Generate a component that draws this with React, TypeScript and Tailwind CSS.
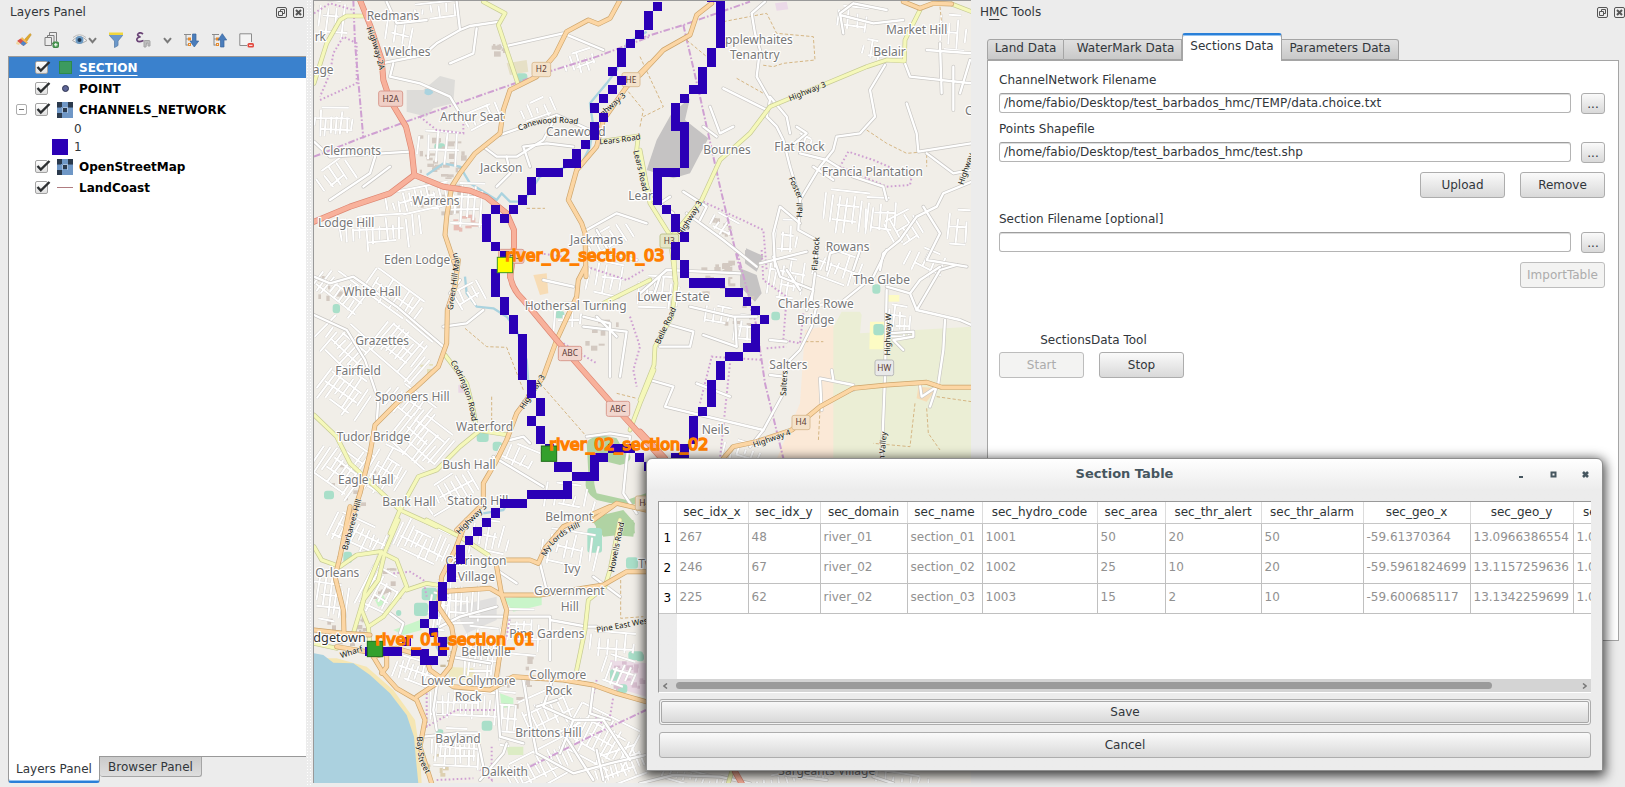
import React from "react";

/* ------------------------------------------------------------------ */
/* Map                                                                  */
/* Geometry is stored per tile, in thirds of a pixel from tile origin.  */
/* ------------------------------------------------------------------ */

type TileId = "A" | "B" | "C" | "D" | "E" | "F";

const tileOrigin: Record<TileId, string> = {
  A: "translate(310 0) scale(0.33333)",
  B: "translate(640 0) scale(0.33333)",
  C: "translate(310 260) scale(0.33333)",
  D: "translate(640 250) scale(0.33333)",
  E: "translate(310 520) scale(0.33333)",
  F: "translate(640 450) scale(0.33333)",
};

type Shape = [TileId, string];

const minor: Shape[] = [
  ["A", "M215,190 L340,165 L380,130 L450,90 L480,78 L570,65 M450,90 L440,5"],
  ["A", "M570,405 L740,345 L850,395 M740,345 L700,420 L620,470 L560,470 L520,440"],
  ["A", "M12,425 L60,470 L300,455 M200,455 L180,520 L60,600 M240,500 L160,560"],
  ["A", "M580,140 L760,100 L880,150 M500,85 L490,160 L420,190 M250,190 L240,230 L330,250 L420,290 L450,340"],
  ["A", "M230,5 L260,70 L350,60 M660,500 L640,440 L710,430 L790,440"],
  ["A", "M560,560 L600,520 L590,470 M830,690 L920,640 L1010,670 M860,690 L900,760 L980,780"],
  ["B", "M375,5 L335,40 L345,100 L360,150 L350,230 L390,300 L380,350 L410,380 L430,420 L450,500 L480,600 L475,690 L530,720 L525,810"],
  ["B", "M735,195 L690,270 L705,350 L660,400 L590,410 L580,450 L540,500 L480,600"],
  ["B", "M995,545 L910,580 L890,620 L830,650 L780,720 L730,760 L720,810"],
  ["B", "M610,100 L600,40 L640,10 M600,45 L700,70 L790,60 M640,10 L740,30"],
  ["B", "M390,290 L440,350 L450,400 M250,265 L380,330 M210,320 L240,400 L280,380 M230,410 L190,380"],
  ["B", "M130,575 L200,620 L180,660 M140,640 L250,720 L350,800 M100,640 L60,610 L90,590"],
  ["B", "M800,310 L830,400 L835,455 L995,430 M860,460 L940,520 L990,510"],
  ["B", "M795,190 L810,230 L995,250 M900,130 L905,280 M940,200 L940,330 M990,180 L960,280 M860,150 L995,160"],
  ["B", "M480,460 L560,480 L640,530 L730,560 L740,600 M520,500 L580,540 M440,450 L500,400 L470,380"],
  ["B", "M480,670 L420,620 L400,700 L405,800 M560,810 L570,760 L640,740 M850,620 L900,700 L860,780 L980,800"],
  ["D", "M740,0 L700,80 L600,160 L530,165 L515,230 L480,300 L440,340 L430,430 L370,540 L330,590"],
  ["D", "M740,110 L810,130 L830,180 L960,210 L995,225"],
  ["D", "M740,120 L735,380 L725,625"],
  ["D", "M915,210 L910,300 L895,400 M545,480 L540,385 L640,405 L640,420 M575,360 L580,390"],
  ["D", "M525,70 L515,150 M500,5 L440,20 L360,40 M400,20 L420,80 L520,120 L500,180 M440,60 L480,120"],
  ["D", "M0,130 L80,60 L300,70 M60,80 L40,140 M150,170 L280,200 L350,200 M285,200 L290,290"],
  ["D", "M190,255 L290,290 M90,225 L160,245 L150,290 L60,290 M30,390 L100,410 L75,470 L370,540 M170,400 L270,440"],
  ["D", "M830,180 L900,60 L950,45 M810,130 L840,90 L900,50 M745,250 L820,245 L820,260 L760,270 L790,300"],
  ["D", "M660,0 L640,60 M840,405 L845,440 L890,410 L870,470 M390,270 L440,275 M390,375 L430,380"],
  ["C", "M12,50 L60,70 L130,50 L260,140 L400,260"],
  ["C", "M12,165 L110,210 L165,300 L205,420 L200,490"],
  ["C", "M400,200 L470,190 L520,150 M450,60 L420,100 M820,170 L900,190 L900,350 M820,200 L950,215 L930,350"],
  ["C", "M600,540 L640,530 L660,550 M550,590 L700,680 M830,530 L900,520 L960,530 L950,600 L940,700 L980,760"],
  ["C", "M700,60 L790,80 M860,170 L920,230"],
  ["E", "M640,480 L660,600 L680,700 L790,760 L900,730 L1008,705"],
  ["E", "M390,320 L450,290 L560,260 M420,410 L540,430 M480,290 L720,290 L720,420 M560,510 L570,650 L640,670"],
  ["E", "M510,780 L580,700 L590,670 M730,470 L700,560 L790,600 L880,600 L960,720 M790,600 L750,700"],
  ["E", "M240,280 L280,310 L270,340 M720,300 L830,320 L860,320 M560,150 L620,190 M690,130 L710,210 M850,170 L930,230"],
  ["E", "M380,500 L370,570 L380,630 M680,560 L740,540 M850,500 L840,580 L900,600"],
  ["E", "M340,650 L440,640 L500,640 L520,740 M860,690 L880,780 M760,640 L850,780"],
  ["F", "M0,1000 L100,975 L240,980 L330,1000 M440,975 L560,990 M700,980 L760,1000"],
];

const yellow: Shape[] = [
  ["A", "M520,5 L585,40 L565,75 L600,180 L625,255"],
  ["A", "M12,250 L50,130 L90,60 L110,48 L160,48"],
  ["A", "M870,425 L985,408 L980,450 L1000,530 L1025,600"],
  ["B", "M0,450 L30,610 L80,690 L100,720 L105,840"],
  ["D", "M95,0 L108,100 L95,200 L45,290 L42,345 L0,450"],
  ["C", "M1032,330 L990,430 L960,510"],
  ["C", "M1020,60 L960,90 L880,130"],
  ["B", "M840,30 L795,120 L793,183 L740,180 L680,200 L560,250 L450,295 L390,320 L330,400 L240,480 L185,600 L100,705"],
  ["B", "M935,12 L995,35"],
  ["C", "M405,285 L470,370 L490,450 L500,510 L595,525"],
  ["C", "M505,515 L450,560 L380,630 L325,650 L270,750 L240,820"],
  ["C", "M12,465 L80,530 L120,610 L270,750 L380,800"],
  ["E", "M265,0 L225,95 L205,180 L160,240 L130,340"],
  ["E", "M350,0 L450,50 L535,105"],
  ["E", "M12,80 L35,120 L90,140 L140,105 L210,95 L260,120 L290,200 L220,290 L175,320 L155,270 L165,215 L215,95"],
  ["E", "M380,195 L350,190 L290,210"],
  ["E", "M930,0 L900,150 L885,200 L835,240 L825,330 L800,450"],
  ["E", "M12,370 L80,385 M175,320 L180,370"],
  ["F", "M265,1000 L275,965"],
];

const orange: Shape[] = [
  ["A", "M930,0 L900,55 L865,72 L835,60 L770,95 L735,165 L680,230 L600,270 L580,330 L570,400 L495,460 L450,520 L425,560 L410,650 L405,705 L440,810"],
  ["C", "M445,0 L435,80 L412,150 L410,250 L385,320 L320,380 L260,430 L195,495 L180,580 L150,700 L110,820"],
  ["A", "M1020,190 L950,260 L880,360 L860,440 L800,510 L775,600 L815,670 L825,700 L828,830"],
  ["C", "M826,20 L805,60 L800,110 L740,240 L700,350 L620,460 L590,540 L555,610 L520,670 L520,730 L440,810"],
  ["E", "M470,0 L435,90 L395,170 L385,260 L425,320 L435,380 L420,440 L380,490 L320,530"],
  ["B", "M215,10 L170,45 L150,105 L70,150 L0,225"],
  ["B", "M790,5 L840,25 L880,10 L935,12"],
  ["D", "M250,625 L280,590 L350,575 L455,540 L540,470 L640,415 L740,405 L860,397 L905,412 L995,412"],
  ["E", "M120,-40 L90,110 L75,170 L100,270 L102,340"],
  ["E", "M12,330 L100,340 L180,345 M80,380 L170,395 L260,385 L310,400"],
  ["E", "M390,215 L540,205 L575,225 L690,225 L880,195 L950,155 L1008,155"],
  ["E", "M560,140 L575,225 L590,270 L570,400 L555,500"],
  ["E", "M590,120 L660,120 L685,130 L705,85 L760,20 L900,-40"],
  ["C", "M850,780 L920,730 L1008,750"],
  ["E", "M190,410 L220,460 L260,505 L320,540 L345,600 L330,680 L365,790"],
  ["E", "M190,410 L230,400 L230,440 L215,460"],
  ["E", "M345,400 L360,450 L430,500 L540,510 L610,470 L760,480 L850,495 L920,520 L1008,545"],
];

const trunk: Shape[] = [
  ["A", "M150,0 L180,75 L215,180 L220,240 L240,300 L288,380 L305,450 L313,525"],
  ["A", "M12,665 L120,620 L240,580 L313,525 L400,560 L480,572 L530,592 L590,640 L612,690 L612,740 L605,800 L600,830"],
  ["C", "M600,30 Q598,80 640,120 L740,240 L800,310 L905,430 L960,490 L1050,590"],
  ["D", "M0,545 L75,625"],
  ["F", "M285,965 L305,1000"],
];

const boundaries: Shape[] = [
  ["A", "M12,470 L150,415 L330,350 L700,220 L860,170 L1020,110"],
  ["A", "M130,0 L135,130 L160,415"],
  ["B", "M0,115 L130,75 L330,5"],
  ["B", "M130,75 L180,290 L240,560 L300,810"],
  ["D", "M290,0 L350,230 L375,400 L430,625"],
  ["E", "M660,740 L840,650 L1008,570"],
];

const dotted: Shape[] = [
  ["A", "M12,40 L60,10 L130,30 M30,300 L140,250 L140,130 L100,110 L70,160 L60,220 L30,290"],
  ["A", "M330,350 L380,390 L460,400 L460,350 M690,760 L760,770"],
  ["B", "M625,455 L600,500 L740,560 L810,555 L815,530 L700,480 Z"],
  ["B", "M190,605 L370,690 L380,810"],
  ["D", "M365,0 L370,90 L440,140 L430,270 L480,280 L490,190 M380,295 L440,290"],
  ["D", "M180,460 L215,320 L370,330 M270,340 L240,625"],
  ["C", "M830,20 L950,60 L1000,30 M760,250 L860,310 M960,170 L990,260 L970,330 L980,380"],
  ["E", "M250,160 L300,155 L340,180 L350,230 M500,290 L600,290 L590,350"],
  ["E", "M350,520 L350,620 L440,570 L560,570 M380,780 L490,775 M545,680 L545,780 L510,750"],
  ["E", "M860,480 L840,570 L870,610 L900,590 L910,530"],
];

const streams: Shape[] = [
  ["A", "M350,525 L400,490 L450,500 L480,550 L560,600 L575,580 L600,605 L640,605 L690,530 L770,500 L810,500 L840,440 L850,380 L840,310 L890,250 L920,210 L950,130 L1010,95"],
  ["C", "M465,50 L470,100 L500,140 L550,145 L590,170 L620,210 L650,300 L655,370"],
  ["E", "M385,300 L380,380 L390,400"],
  ["C", "M520,760 L580,750 L590,735"],
];

const areas: [TileId, string, string][] = [
  ["A", "M290,270 L340,270 L390,228 L435,240 L430,310 L370,325 L350,350 L290,335 Z", "#dddcd9"],
  ["A", "M345,268 Q365,262 370,278 Q355,292 343,280 Z", "#aad3df"],
  ["B", "M150,295 L135,360 L205,415 L150,520 L100,535 L20,510 L50,420 L95,340 Z", "#c5c3c3"],
  ["B", "M318,745 L370,768 L350,812 L320,790 Z", "#c5c3c3"],
  ["D", "M300,55 L350,75 L365,130 L345,155 L300,110 Z", "#c5c3c3"],
  ["D", "M315,0 L370,18 L350,65 L315,40 Z", "#c5c3c3"],
  ["D", "M605,185 L660,185 L665,195 L660,250 L1000,230 V640 H575 V240 Z", "#ebeed5"],
  ["D", "M495,240 L580,225 V640 H405 L480,460 Z", "#fbe9d7"],
  ["D", "M690,215 L735,215 L735,298 L688,298 Z", "#fdfbc4"],
  ["D", "M745,135 L778,135 L778,155 L745,155 Z", "#fdfbc4"],
  ["D", "M835,410 L890,415 L860,455 L830,445 Z", "#f6dcb8"],
  ["A", "M590,190 L650,180 L655,215 L600,225 Z", "#e6e0c6"],
  ["B", "M405,10 L440,5 L445,28 L410,32 Z", "#ebd9e8"],
  ["C", "M670,45 L710,40 L715,100 L690,105 Z", "#f7dcb5"],
  ["C", "M445,375 L465,370 L467,398 L445,398 Z", "#ead7e6"],
  ["C", "M830,545 Q860,515 920,535 L935,560 Q990,600 930,615 L870,600 Q840,640 860,700 L950,720 L1008,700 L1008,720 L950,740 L860,720 Q810,690 835,640 Z", "#b0d3a3"],
  ["C", "M855,770 L940,750 L975,790 L970,830 L860,820 Z", "#b0d3a3"],
  ["E", "M845,0 L970,0 L975,40 L880,50 Z", "#b0d3a3"],
  ["E", "M580,235 L695,225 L695,255 L610,275 Z", "#c9f5c9"],
  ["E", "M195,240 L220,225 L230,250 L205,260 Z", "#c9f5c9"],
  ["E", "M250,330 L330,300 L335,330 L280,345 Z", "#c9f5c9"],
  ["E", "M570,520 L610,535 L610,560 L575,565 Z", "#c9f5c9"],
  ["E", "M590,680 L640,680 L640,705 L595,705 Z", "#dcecc4"],
  ["E", "M410,440 L490,445 L500,480 L420,480 Z", "#efe9c0"],
  ["E", "M900,420 L1008,430 L1008,530 L910,500 Z", "#ecdbe6"],
  ["E", "M430,260 L560,230 L560,300 L470,340 Z", "#e0dfde"],
  ["E", "M12,415 L80,415 L170,440 L250,510 L315,600 L330,700 L335,790 H12 Z", "#f5e6b3"],
  ["E", "M12,400 L40,405 L70,428 L130,430 L180,465 L240,520 L290,585 L312,650 L318,720 L325,790 L12,790 Z", "#abd1df"],
];

const pitches: [TileId, number, number, number, number][] = [
  ["A", 618, 220, 34, 26],
  ["A", 373, 430, 32, 22],
  ["D", 697, 103, 24, 28],
  ["D", 394, 185, 26, 26],
  ["D", 700, 222, 32, 34],
  ["C", 68, 132, 22, 28],
  ["C", 733, 153, 30, 22],
  ["C", 500, 516, 36, 30],
  ["C", 548, 545, 28, 28],
  ["C", 42, 692, 30, 26],
  ["E", 100, 95, 26, 34],
  ["E", 832, 24, 44, 74],
  ["E", 948, 112, 36, 34],
  ["E", 335, 203, 46, 38],
  ["E", 312, 248, 42, 40],
  ["E", 258, 270, 16, 18],
  ["E", 900, 448, 28, 34],
  ["E", 955, 394, 44, 26],
  ["E", 918, 493, 34, 26],
  ["E", 515, 602, 32, 30],
  ["E", 378, 628, 22, 14],
  ["F", -12, 610, 24, 24],
];

/* Street hatches: tile, centre x/y, width, height, rotation, spacing */
const hatches: [TileId, number, number, number, number, number, number][] = [
  ["A", 60, 60, 110, 120, 5, 24],
  ["A", 75, 370, 120, 90, 3, 16],
  ["A", 270, 110, 90, 120, 10, 26],
  ["A", 380, 30, 130, 50, -8, 24],
  ["A", 330, 600, 200, 80, -12, 18],
  ["A", 210, 700, 240, 110, -4, 20],
  ["A", 470, 620, 110, 140, 2, 20],
  ["A", 690, 330, 110, 60, -20, 24],
  ["A", 810, 190, 90, 70, -18, 22],
  ["A", 390, 450, 130, 110, 4, 28],
  ["A", 520, 350, 110, 60, -25, 26],
  ["A", 80, 530, 110, 80, -35, 26],
  ["A", 900, 720, 130, 70, -30, 26],
  ["B", 620, 640, 140, 130, 8, 22],
  ["B", 720, 660, 90, 130, 5, 22],
  ["B", 800, 690, 100, 110, -30, 22],
  ["B", 440, 720, 70, 120, 5, 22],
  ["B", 940, 100, 80, 110, 4, 26],
  ["B", 250, 680, 80, 60, 30, 22],
  ["B", 490, 430, 40, 50, 20, 20],
  ["B", 640, 60, 90, 80, 5, 28],
  ["B", 700, 150, 60, 60, 8, 24],
  ["B", 960, 690, 70, 120, 6, 26],
  ["C", 90, 100, 160, 100, 38, 18],
  ["C", 100, 260, 160, 130, 42, 18],
  ["C", 280, 270, 180, 150, 40, 17],
  ["C", 250, 110, 180, 90, 35, 20],
  ["C", 110, 400, 160, 130, 35, 18],
  ["C", 300, 440, 160, 90, 38, 17],
  ["C", 330, 540, 160, 140, 40, 16],
  ["C", 90, 620, 150, 170, 35, 18],
  ["C", 230, 640, 110, 150, 30, 17],
  ["C", 420, 700, 160, 90, -30, 20],
  ["C", 480, 110, 80, 70, -30, 20],
  ["C", 620, 600, 120, 90, 25, 26],
  ["C", 780, 180, 90, 100, 2, 26],
  ["C", 890, 60, 110, 110, 10, 24],
  ["C", 780, 720, 150, 90, 10, 30],
  ["D", 60, 130, 130, 100, 5, 24],
  ["D", 320, 240, 70, 90, 5, 18],
  ["D", 440, 90, 110, 130, 10, 20],
  ["D", 600, 60, 150, 100, 20, 22],
  ["D", 780, 220, 70, 110, 5, 16],
  ["D", 860, 40, 120, 80, 25, 26],
  ["D", 240, 200, 90, 60, 12, 24],
  ["D", 310, 605, 120, 60, 15, 22],
  ["E", 150, 50, 180, 90, 25, 18],
  ["E", 60, 230, 110, 150, 8, 18],
  ["E", 210, 220, 110, 140, 28, 20],
  ["E", 330, 60, 170, 110, 25, 17],
  ["E", 450, 250, 130, 150, 3, 17],
  ["E", 520, 400, 110, 160, 4, 17],
  ["E", 640, 340, 130, 140, 3, 22],
  ["E", 540, 60, 110, 110, 12, 22],
  ["E", 330, 460, 150, 70, 18, 16],
  ["E", 470, 560, 220, 90, 3, 18],
  ["E", 440, 690, 150, 130, 2, 14],
  ["E", 590, 600, 70, 170, 3, 20],
  ["E", 720, 580, 150, 140, -25, 22],
  ["E", 870, 660, 200, 150, 28, 18],
  ["E", 700, 740, 220, 110, -28, 18],
  ["E", 930, 740, 150, 100, -20, 16],
  ["E", 900, 380, 170, 90, 4, 26],
  ["E", 780, 90, 170, 110, 10, 24],
  ["E", 930, 460, 110, 90, 20, 20],
  ["E", 390, 260, 60, 150, 10, 18],
  ["F", 160, 985, 220, 40, 15, 20],
  ["F", 460, 985, 220, 40, -10, 22],
  ["F", 750, 985, 240, 40, 10, 26],
];

/* Building clusters: tile, x, y, width, height, count, colour */
const clusters: [TileId, number, number, number, number, number, string][] = [
  ["A", 320, 405, 150, 110, 26, "#d3c9c1"],
  ["A", 330, 520, 120, 130, 22, "#d3c9c1"],
  ["A", 520, 130, 60, 26, 8, "#d3c9c1"],
  ["A", 430, 640, 60, 50, 8, "#e8bdb5"],
  ["B", 190, 640, 90, 60, 8, "#d3c9c1"],
  ["B", 220, 780, 60, 30, 8, "#d3c9c1"],
  ["D", 160, 30, 110, 110, 18, "#d3c9c1"],
  ["D", 250, 130, 90, 90, 8, "#d3c9c1"],
  ["C", 20, 30, 120, 110, 8, "#d3c9c1"],
  ["C", 820, 160, 100, 130, 9, "#d3c9c1"],
  ["C", 330, 310, 30, 30, 4, "#e4e0bb"],
  ["E", 180, 140, 80, 90, 14, "#d0c5bd"],
  ["E", 30, 290, 130, 80, 18, "#d0c5bd"],
  ["E", 390, 350, 40, 90, 8, "#c9bb9f"],
  ["E", 560, 400, 110, 160, 10, "#d3c9c1"],
  ["E", 910, 420, 90, 90, 14, "#d9bfd0"],
  ["E", 350, 660, 50, 100, 8, "#ddd0b0"],
  ["C", 60, 610, 130, 130, 8, "#d3c9c1"],
];

function random(seed: number) {
  let s = seed * 9301 + 49297;
  return () => {
    s = (s * 1103515245 + 12345) % 2147483648;
    return s / 2147483648;
  };
}

function hatchPath(w: number, h: number, gap: number, seed: number) {
  const r = random(seed);
  let d = "";
  for (let x = -w / 2; x <= w / 2; x += gap) {
    const a = -h / 2 + r() * h * 0.4;
    const b = h / 2 - r() * h * 0.4;
    d += `M${Math.round(x)},${Math.round(a)} L${Math.round(x + r() * 8 - 4)},${Math.round(b)} `;
  }
  for (let y = -h / 2; y <= h / 2; y += gap * 2) {
    const a = -w / 2 + r() * w * 0.35;
    const b = w / 2 - r() * w * 0.35;
    d += `M${Math.round(a)},${Math.round(y)} L${Math.round(b)},${Math.round(y + r() * 10 - 5)} `;
  }
  return d;
}

const hatchLines = hatches.map(([tile, x, y, w, h, rot, gap], i) => ({
  transform: `${tileOrigin[tile]} translate(${x} ${y}) rotate(${rot})`,
  d: hatchPath(w, h, gap, i + 3),
}));

const buildings = clusters.flatMap(([tile, x, y, w, h, n, fill], i) => {
  const r = random(i + 41);
  return Array.from({ length: n }, (_, k) => ({
    key: `${i}-${k}`,
    transform: tileOrigin[tile],
    x: Math.round(x + r() * w),
    y: Math.round(y + r() * h),
    width: Math.round(6 + r() * 16),
    height: Math.round(5 + r() * 12),
    fill,
  }));
});

const channel: [TileId, [number, number, number, number][]][] = [
  ["A", [
    [1029, 6, 27, 27], [1002, 33, 27, 57], [975, 90, 27, 27], [948, 117, 27, 27], [921, 144, 27, 57],
    [894, 201, 27, 27], [921, 228, 27, 27], [894, 255, 27, 27], [867, 282, 27, 27], [840, 309, 27, 30],
    [867, 339, 27, 27], [840, 366, 27, 54], [813, 420, 27, 27], [786, 447, 27, 57], [759, 477, 54, 27],
    [678, 504, 81, 27], [651, 531, 27, 54], [624, 585, 27, 30], [597, 615, 27, 27], [543, 615, 27, 27],
    [570, 642, 27, 27], [516, 642, 27, 84], [543, 726, 27, 27], [570, 753, 27, 27],
  ]],
  ["B", [
    [201, 3, 54, 3], [228, 3, 27, 141], [201, 144, 27, 57], [174, 201, 27, 81], [147, 255, 54, 27],
    [120, 282, 27, 27], [93, 309, 27, 84], [120, 366, 27, 138], [39, 504, 81, 27], [39, 531, 27, 84],
    [66, 615, 27, 27], [93, 642, 27, 54], [120, 696, 27, 30], [93, 726, 27, 54],
  ]],
  ["D", [
    [120, 30, 27, 54], [147, 84, 108, 30], [255, 114, 54, 27], [309, 141, 24, 27], [333, 168, 27, 27],
    [360, 195, 27, 27], [333, 222, 27, 84], [309, 279, 51, 27], [255, 306, 54, 27], [228, 333, 27, 57],
    [201, 390, 27, 81], [174, 471, 27, 27], [147, 498, 27, 84], [120, 582, 27, 45], [93, 609, 54, 27],
    [-15, 609, 27, 27], [12, 636, 27, 27],
  ]],
  ["C", [
    [543, 27, 27, 84], [570, 111, 27, 54], [597, 165, 27, 57], [624, 222, 27, 138], [651, 360, 27, 54],
    [678, 414, 27, 54], [651, 468, 27, 30], [678, 498, 27, 54], [705, 552, 27, 27], [732, 606, 54, 30],
    [786, 636, 81, 27], [840, 579, 54, 27], [840, 600, 27, 40], [894, 552, 81, 27], [975, 579, 27, 27],
    [759, 663, 27, 30], [651, 690, 135, 27], [570, 717, 81, 27], [543, 744, 27, 30], [516, 774, 27, 27],
  ]],
  ["E", [
    [489, 21, 27, 27], [465, 48, 24, 27], [438, 75, 27, 57], [411, 132, 27, 54], [384, 186, 27, 57],
    [357, 243, 27, 54], [330, 297, 27, 27], [357, 324, 27, 27], [384, 351, 27, 57], [276, 351, 27, 27],
    [165, 381, 111, 27], [303, 387, 54, 21], [330, 408, 54, 27],
  ]],
];

/* Place names: tile, x, baseline, text */
const places: [TileId, number, number, string][] = [
  ["A", 170, 59, "Redmans"], ["A", 222, 168, "Welches"], ["A", 14, 123, "rk"], ["A", 8, 221, "age"],
  ["A", 390, 362, "Arthur Seat"], ["A", 708, 407, "Canewood"], ["A", 38, 465, "Clermonts"],
  ["A", 510, 515, "Jackson"], ["A", 307, 614, "Warrens"], ["A", 24, 682, "Lodge Hill"],
  ["A", 780, 733, "Jackmans"], ["A", 222, 791, "Eden Lodge"], ["A", 955, 600, "Lears"],
  ["B", 232, 131, "Applewhaites"], ["B", 270, 178, "Tenantry"], ["B", 738, 101, "Market Hill"],
  ["B", 700, 169, "Belair"], ["B", 190, 462, "Bournes"], ["B", 403, 453, "Flat Rock"],
  ["B", 545, 529, "Francia Plantation"], ["B", 557, 754, "Rowans"], ["B", 975, 345, "C"],
  ["D", 640, 103, "The Glebe"], ["D", 413, 174, "Charles Rowe"], ["D", 471, 221, "Bridge"],
  ["D", 388, 357, "Salters"], ["D", 185, 552, "Neils"],
  ["C", 982, 124, "Lower Estate"], ["C", 100, 109, "White Hall"], ["C", 644, 150, "Hothersal Turning"],
  ["C", 136, 255, "Grazettes"], ["C", 76, 345, "Fairfield"], ["C", 195, 422, "Spooners Hill"],
  ["C", 438, 512, "Waterford"], ["C", 80, 544, "Tudor Bridge"], ["C", 397, 626, "Bush Hall"],
  ["C", 84, 672, "Eagle Hall"], ["C", 217, 739, "Bank Hall"], ["C", 412, 736, "Station Hill"],
  ["C", 706, 782, "Belmont"],
  ["E", 406, 136, "Carrington"], ["E", 443, 184, "Village"], ["E", 16, 170, "Orleans"], ["E", 762, 158, "Ivy"],
  ["E", 672, 225, "Government"], ["E", 752, 273, "Hill"], ["E", 598, 353, "Pine Gardens"],
  ["E", 454, 407, "Belleville"], ["E", 333, 496, "Lower Collymore"], ["E", 434, 543, "Rock"],
  ["E", 658, 478, "Collymore"], ["E", 706, 525, "Rock"], ["E", 376, 670, "Bayland"],
  ["E", 616, 650, "Brittons Hill"], ["E", 514, 768, "Dalkeith"], ["E", 985, 143, "Tw"],
  ["F", 415, 974, "Sargeants Village"],
];

/* Street names follow a curve: tile, path, text */
const streetNames: [TileId, string, string][] = [
  ["A", "M174,82 L194,130 L204,170 L220,230", "Highway 2A"],
  ["A", "M626,388 Q700,348 825,370", "Canewood Road"],
  ["A", "M868,427 Q930,424 1010,408", "Lears Road"],
  ["A", "M976,452 Q990,510 1010,600", "Lears Road"],
  ["A", "M874,346 L950,280", "ghway 3"],
  ["B", "M448,298 L575,247", "Highway 3"],
  ["B", "M120,706 L192,590", "Highway 3"],
  ["B", "M451,532 L486,610", "Foster"],
  ["B", "M480,652 L484,560", "Hall"],
  ["B", "M526,812 L534,690", "Flat Rock"],
  ["B", "M964,554 L1006,430", "Highway"],
  ["D", "M54,282 L110,160", "Belle Road"],
  ["D", "M744,316 L748,170", "Highway W"],
  ["D", "M432,438 L438,330", "Salters"],
  ["D", "M340,587 L475,540", "Highway 4"],
  ["D", "M726,640 L738,500", "th Valley"],
  ["C", "M422,150 L442,10 L420,-90", "Green Hill Main"],
  ["C", "M426,304 Q480,390 494,500", "Codrington Road"],
  ["C", "M636,446 L712,330", "Highway 3"],
  ["C", "M106,870 L134,770 L162,670", "Barbarees Hill"],
  ["C", "M444,820 L534,730", "Highway 3"],
  ["E", "M702,108 Q730,40 840,2", "My Lords Hill"],
  ["E", "M906,156 L938,0", "Howells Road"],
  ["E", "M92,409 L180,380", "Wharf"],
  ["E", "M860,332 L1050,297", "Pine East West"],
  ["E", "M326,650 L332,720 L372,795", "Bay Street"],
];

type Shield = [TileId, number, number, number, number, string, string, string];
const shields: Shield[] = [
  ["A", 206, 273, 72, 46, "H2A", "#f0cfc6", "#d99c90"],
  ["A", 666, 187, 56, 43, "H2", "#f4e2ca", "#dcbf98"],
  ["A", 936, 218, 54, 42, "HE", "#f4e2ca", "#dcbf98"],
  ["A", 566, 748, 76, 42, "ABC", "#f0cfc6", "#d99c90"],
  ["B", 60, 702, 56, 42, "H3", "#e5e6c6", "#bfc48d"],
  ["C", 745, 259, 70, 43, "ABC", "#f2d6ce", "#d99c90"],
  ["C", 889, 424, 70, 45, "ABC", "#f2d6ce", "#d99c90"],
  ["C", 976, 708, 56, 42, "H4", "#f4e2ca", "#dcbf98"],
  ["D", 705, 330, 56, 47, "HW", "#e9e9e9", "#b9b9b9"],
  ["D", 456, 496, 54, 43, "H4", "#f4e2ca", "#dcbf98"],
];

const markers: [TileId, number, number, string, string, string][] = [
  ["E", 172, 364, "#33a02c", "#1d6b19", "river_01_section_01"],
  ["C", 694, 558, "#33a02c", "#1d6b19", "river_02_section_02"],
  ["A", 562, 772, "#ffff00", "#3f9a1c", "river_02_section_03"],
];

function Roads({ shapes, casing, fill, width }: { shapes: Shape[]; casing: string; fill: string; width: number }) {
  return (
    <g fill="none" strokeLinejoin="round" strokeLinecap="round">
      {shapes.map(([t, d], i) => (
        <path key={`c${i}`} transform={tileOrigin[t]} d={d} stroke={casing} strokeWidth={width + 4} />
      ))}
      {shapes.map(([t, d], i) => (
        <path key={`f${i}`} transform={tileOrigin[t]} d={d} stroke={fill} strokeWidth={width} />
      ))}
    </g>
  );
}

function MapCanvas() {
  return (
    <svg
      className="absolute inset-0 h-full w-full bg-[#f1eee8]"
      viewBox="314 1 657 782"
      preserveAspectRatio="xMinYMin slice"
      role="img"
      aria-label="Map of channels and sections"
    >
      {areas.map(([t, d, fill], i) => (
        <path key={i} transform={tileOrigin[t]} d={d} fill={fill} />
      ))}
      {pitches.map(([t, x, y, w, h], i) => (
        <rect key={i} transform={tileOrigin[t]} x={x} y={y} width={w} height={h} rx={9} fill="#a9dfc9" />
      ))}
      {buildings.map(({ key, ...b }) => (
        <rect key={key} {...b} />
      ))}
      <g fill="none" stroke="#aad3df" strokeWidth={7} strokeLinejoin="round">
        {streams.map(([t, d], i) => (
          <path key={i} transform={tileOrigin[t]} d={d} />
        ))}
      </g>
      <g fill="none" stroke="#cdcbc8" strokeWidth={8}>
        {hatchLines.map((h, i) => (
          <path key={i} {...h} />
        ))}
      </g>
      <g fill="none" stroke="#ffffff" strokeWidth={6}>
        {hatchLines.map((h, i) => (
          <path key={i} {...h} />
        ))}
      </g>
      <g fill="none" stroke="#cfa0d2" strokeWidth={6} strokeDasharray="5 7">
        {dotted.map(([t, d], i) => (
          <path key={i} transform={tileOrigin[t]} d={d} />
        ))}
      </g>
      <g fill="none" stroke="#cfa0d2" strokeWidth={6} strokeDasharray="20 6 5 6">
        {boundaries.map(([t, d], i) => (
          <path key={i} transform={tileOrigin[t]} d={d} />
        ))}
      </g>
      <g fill="none" stroke="#d5b684" strokeWidth={3} strokeDasharray="10 6">
        <path transform={tileOrigin.B} d="M250,65 L380,40 L410,100 L520,110 L525,180 L430,190 L400,200 L365,195 M290,235 L370,280 M680,390 L740,430 L800,460 L860,455 L860,500 M900,20 L905,70 M0,170 L70,320 L10,350 M140,120 L200,170" />
        <path transform={tileOrigin.C} d="M465,205 L530,260 L590,262 L640,390 M690,370 L830,530 M545,410 L545,480 M920,400 L980,415" />
        <path transform={tileOrigin.D} d="M495,275 L550,275 M540,480 L535,575 M825,460 L810,590 L700,580 M860,475 L865,550 L900,600 M890,440 L995,455" />
        <path transform={tileOrigin.A} d="M955,275 L1000,330 L990,380 M650,625 L705,625" />
        <path transform={tileOrigin.E} d="M932,180 L932,295 L1000,290" />
      </g>
      <Roads shapes={minor} casing="#c9c7c4" fill="#ffffff" width={7} />
      <Roads shapes={yellow} casing="#c6ca94" fill="#f5f8ba" width={10} />
      <Roads shapes={orange} casing="#cda56c" fill="#fcd6a4" width={11} />
      <Roads shapes={trunk} casing="#dd8672" fill="#f8b19b" width={14} />

      <g fontFamily="'Noto Sans', sans-serif" fontSize={24} fill="#111111" stroke="#f4f2e6" strokeWidth={3} paintOrder="stroke">
        {streetNames.map(([t, d, name], i) => (
          <g key={i} transform={tileOrigin[t]}>
            <path id={`street-${i}`} d={d} fill="none" stroke="none" />
            <text dy={6}>
              <textPath href={`#street-${i}`}>{name}</textPath>
            </text>
          </g>
        ))}
      </g>

      <g fontFamily="'Noto Sans', sans-serif" fontSize={25} fill="#5c3b36">
        {shields.map(([t, x, y, w, h, name, fill, stroke], i) => (
          <g key={i} transform={tileOrigin[t]}>
            <rect x={x} y={y} width={w} height={h} rx={6} fill={fill} stroke={stroke} strokeWidth={3} />
            <text x={x + w / 2} y={y + h / 2 + 9} textAnchor="middle">{name}</text>
          </g>
        ))}
      </g>

      <g fontFamily="'Noto Sans', sans-serif" fontSize={36} fill="#777777" stroke="#ffffff" strokeWidth={7} strokeLinejoin="round" paintOrder="stroke">
        {places.map(([t, x, y, name], i) => (
          <text key={i} transform={tileOrigin[t]} x={x} y={y}>{name}</text>
        ))}
        <text transform={tileOrigin.E} x={10} y={365} fontSize={38} fill="#333333">dgetown</text>
      </g>

      <g fill="#2b00b6" shapeRendering="crispEdges">
        {channel.flatMap(([t, cells]) =>
          cells.map(([x, y, w, h]) => (
            <rect key={`${t}${x}-${y}`} transform={tileOrigin[t]} x={x} y={y} width={w} height={h} />
          ))
        )}
      </g>

      {markers.map(([t, x, y, fill, stroke, name]) => (
        <g key={name} transform={tileOrigin[t]}>
          <rect x={x} y={y} width={46} height={46} fill={fill} stroke={stroke} strokeWidth={3} />
          <text
            x={x + 24}
            y={y + 12}
            fontFamily="'DejaVu Sans', sans-serif"
            fontSize={48}
            fill="#ff7f00"
            stroke="#ff7f00"
            strokeWidth={5}
          >
            {name}
          </text>
        </g>
      ))}
    </svg>
  );
}

/* ------------------------------------------------------------------ */
/* Shared controls                                                      */
/* ------------------------------------------------------------------ */

function DockButtons() {
  return (
    <div className="flex gap-1.5">
      <button type="button" aria-label="Float panel" className="size-[11px]">
        <svg viewBox="0 0 11 11" className="size-[11px]" fill="none" stroke="#555">
          <rect x=".5" y=".5" width="10" height="10" rx="1.5" />
          <path d="M4.5 4V2.5h4v4H7M2.5 4.5h4v4h-4z" />
        </svg>
      </button>
      <button type="button" aria-label="Close panel" className="size-[11px]">
        <svg viewBox="0 0 11 11" className="size-[11px]" fill="none" stroke="#555">
          <rect x=".5" y=".5" width="10" height="10" rx="1.5" />
          <path d="M3 3l5 5M8 3l-5 5" strokeWidth="2" />
        </svg>
      </button>
    </div>
  );
}

const buttonFace =
  "rounded-[3px] border border-[#adadad] bg-linear-to-b from-[#fafafa] to-[#d9d9d9] disabled:border-[#bdbdbd] disabled:bg-[#f3f3f2] disabled:bg-none disabled:text-[#acacac]";

function PushButton({ children, disabled }: { children: string; disabled?: boolean }) {
  return (
    <button type="button" disabled={disabled} className={`h-[26px] w-[85px] ${buttonFace}`}>
      {children}
    </button>
  );
}

function FileField({ id, label, value }: { id: string; label: string; value: string }) {
  return (
    <div className="flex flex-col gap-[5px]">
      <label htmlFor={id} className="leading-4">{label}</label>
      <div className="flex h-[21px] gap-2.5">
        <input
          id={id}
          type="text"
          defaultValue={value}
          className="h-5 min-w-0 flex-1 rounded-[3px] border border-[#b4b4b4] border-t-[#9e9e9e] bg-white px-1 shadow-[inset_0_1px_0_#ddd] outline-none"
        />
        <button type="button" aria-label={`Browse ${label}`} className={`h-[21px] w-6 leading-4 ${buttonFace}`}>
          ...
        </button>
      </div>
    </div>
  );
}

/* ------------------------------------------------------------------ */
/* Layers panel                                                         */
/* ------------------------------------------------------------------ */

function Chevron() {
  return (
    <svg viewBox="0 0 9 7" className="h-[7px] w-[9px]" fill="none" stroke="#7a7a7a" strokeWidth="2">
      <path d="M1 1.2l3.5 4 3.5-4" />
    </svg>
  );
}

function LayersToolbar() {
  return (
    <div className="flex h-8 items-center pl-4 pr-[52px]">
      <div className="flex flex-1 items-center justify-between">
        <button type="button" aria-label="Layer styling">
          <svg viewBox="0 0 16 16" className="size-4">
            <path d="M8.500 7.500L14 1.500l1.300 1.200-4.600 6.800z" fill="#e0a92c" stroke="#b98a2a" strokeWidth=".5" />
            <path d="M6 5l6 5.500-1.500 1.500-6-5z" fill="#f0b956" />
            <path d="M4.500 6.500l6 5-3 2.500-6.500-5z" fill="#d9534a" />
            <path d="M7 9l3.500 2.500-3 2.500-3-2.200z" fill="#4f87c9" />
            <path d="M1 9l3 2.500-1 1.500-3-1z" fill="#f0d6a0" />
          </svg>
        </button>
        <button type="button" aria-label="Add group">
          <svg viewBox="0 0 15 16" className="h-4 w-[15px]" fill="none" stroke="#7d7d7d">
            <path d="M5.500 3.500V.5h7v9M3.500 5.500v-2h6.500v8h-3M1 13.500v-8h6.500v8z" />
            <rect x="9" y="10" width="5.500" height="5.500" rx="1" fill="#4d9b55" stroke="#3e8747" />
            <path d="M11.800 11v3.500M10 12.800h3.500" stroke="#fff" />
          </svg>
        </button>
        <button type="button" aria-label="Manage visibility" className="flex items-center">
          <svg viewBox="0 0 16 12" className="h-3 w-4">
            <path d="M.5 6.500Q7.500-1 15 6.500 7.500 12 .5 6.500z" fill="#f4f4f4" stroke="#aaa" />
            <circle cx="7.500" cy="6" r="4" fill="#6d9bc4" />
            <circle cx="7.500" cy="6" r="2" fill="#223a55" />
            <path d="M1 3.500Q7.500-2 14 3.500" fill="none" stroke="#bbb" />
          </svg>
          <Chevron />
        </button>
        <button type="button" aria-label="Filter legend">
          <svg viewBox="0 0 14 16" className="h-4 w-3.5">
            <path d="M.5 1.500h13v2L9 9v4.500l-3.500 2V9l-5-5.500z" fill="#6a98cb" stroke="#5b7fa8" strokeWidth=".8" />
            <path d="M0 .5h14v2.500H0z" fill="#f0d63c" />
          </svg>
        </button>
        <button type="button" aria-label="Filter by expression">
          <svg viewBox="0 0 15 16" className="h-4 w-[15px]" fill="none">
            <path d="M7 2Q4-.3 2.200 1.700T4.500 5Q.2 5.500 1 8.200T7.500 8.500" stroke="#6b4577" strokeWidth="1.700" />
            <path d="M8 15v-5.500q0-1 1-1h4q1 0 1 1V14h-2v-3h-1.500l-.5 4z" fill="#bdbdbd" stroke="#a5a5a5" />
          </svg>
        </button>
        <button type="button" aria-label="More filters"><Chevron /></button>
        <button type="button" aria-label="Expand all">
          <svg viewBox="0 0 15 15" className="size-[15px]" fill="none">
            <path d="M0 1.500h7M2 1v11.500M2 6h2M2 12h2" stroke="#8a8a8a" />
            <rect x="4.500" y="5" width="2" height="2" stroke="#e88b2c" />
            <rect x="4.500" y="10.500" width="2" height="2" stroke="#e88b2c" />
            <path d="M8.500 1h3.500v7h2.700L10.300 14 6 8h2.500z" fill="#4a7dbb" stroke="#3a669e" strokeWidth=".7" />
          </svg>
        </button>
        <button type="button" aria-label="Collapse all">
          <svg viewBox="0 0 15 15" className="size-[15px]" fill="none">
            <path d="M0 1.500h7M2 1v11.500M2 6h2M2 12h2" stroke="#8a8a8a" />
            <rect x="4.500" y="5" width="2" height="2" stroke="#e88b2c" />
            <rect x="4.500" y="10.500" width="2" height="2" stroke="#e88b2c" />
            <path d="M8.500 14h3.500V7h2.700L10.300.7 6 7h2.500z" fill="#4a7dbb" stroke="#3a669e" strokeWidth=".7" />
          </svg>
        </button>
        <button type="button" aria-label="Remove layer">
          <svg viewBox="0 0 15 15" className="size-[15px]">
            <path d="M8 12.500H.8V.8h11.700V9" fill="#f4f4f4" stroke="#8c8c8c" />
            <rect x="8.500" y="10" width="6.500" height="4.500" rx="1.500" fill="#e2483e" />
            <path d="M10 12.300h3.500" stroke="#fff" />
          </svg>
        </button>
      </div>
    </div>
  );
}

function RasterIcon() {
  return (
    <svg viewBox="0 0 16 16" className="size-4" shapeRendering="crispEdges">
      <path fill="#6f97c6" d="M0 0h16v16H0z" />
      <path fill="#2b3a4d" d="M0 0h5v5H0zM11 0h5v5h-5zM6 6h4v4H6zM0 11h5v5H0zM11 11h5v5h-5z" />
      <path fill="#6f97c6" d="M5 0h6v5H5zM11 11h5v5h-5z" />
      <path fill="#a7bfdc" d="M6 5h5v1H6zM5 6h1v5H5zM10 6h1v5h-1z" />
      <path fill="#496486" d="M11 5h5v1h-5zM0 5h4v1H0z" />
    </svg>
  );
}

function LayerRow({ name, icon, selected, expandable }: { name: string; icon: React.ReactNode; selected?: boolean; expandable?: boolean }) {
  return (
    <div className={`flex h-[21px] items-center pl-[7px] ${selected ? "bg-[#3a81cd]" : ""}`}>
      <span className="mr-2 flex w-[11px] shrink-0">
        {expandable && (
          <button type="button" aria-label={`Collapse ${name}`} className="flex size-[11px] items-center justify-center rounded-[2px] border border-[#adadad] bg-white">
            <span className="h-px w-[5px] bg-[#777]" />
          </button>
        )}
      </span>
      <label className="flex items-center">
        <span className="relative mr-1.5 flex w-4">
          <input type="checkbox" defaultChecked className="size-[13px] appearance-none rounded-[2px] border border-[#a3a3a3] bg-linear-to-b from-white to-[#e0e0e0]" />
          <svg viewBox="0 0 16 12" className="pointer-events-none absolute left-0 top-0 h-3 w-4" fill="none" stroke="#2c2f31" strokeWidth="2.400">
            <path d="M2.500 6l3.300 3.500L14.500 1" />
          </svg>
        </span>
        <span className="mr-1.5 flex w-4 justify-center">{icon}</span>
        <span className={`font-bold ${selected ? "text-white underline underline-offset-3" : "text-black"}`}>{name}</span>
      </label>
    </div>
  );
}

function LayersPanel() {
  return (
    <aside className="flex w-[313px] shrink-0 bg-[#ececec]">
      <div className="flex min-w-0 flex-1 flex-col">
        <header className="flex h-6 items-center justify-between pl-2.5 pr-0.5">
          <h2>Layers Panel</h2>
          <DockButtons />
        </header>
        <LayersToolbar />
        <ul className="ml-2 flex-1 border-b border-l border-t border-[#999] bg-white">
          <li><LayerRow name="SECTION" selected icon={<span className="size-[13px] border border-[#2c8a4c] bg-[#3c9a5f]" />} /></li>
          <li><LayerRow name="POINT" icon={<span className="size-[7px] rounded-full border border-[#2e3350] bg-[#5d6596]" />} /></li>
          <li>
            <LayerRow name="CHANNELS_NETWORK" icon={<RasterIcon />} expandable />
            <ul className="pl-[43px]">
              <li className="flex h-[18px] items-center gap-1.5"><span className="size-4" />0</li>
              <li className="flex h-[18px] items-center gap-1.5"><span className="size-4 bg-[#2b00b6]" />1</li>
            </ul>
          </li>
          <li><LayerRow name="OpenStreetMap" icon={<RasterIcon />} /></li>
          <li><LayerRow name="LandCoast" icon={<span className="h-px w-4 bg-[#b07c80]" />} /></li>
        </ul>
        <div role="tablist" className="mb-1 flex h-[26px] items-start pl-2">
          <button role="tab" aria-selected="true" type="button" className="-mt-px h-[27px] w-[92px] rounded-b-[3px] border-x border-b-2 border-x-[#999] border-b-[#2a80d8] bg-white shadow-[inset_0_-1px_0_#93c3f2]">
            Layers Panel
          </button>
          <button role="tab" aria-selected="false" type="button" className="h-5 w-[102px] rounded-b-[3px] border-b border-r border-[#a5a5a5] bg-linear-to-b from-[#cacaca] to-[#dedede]">
            Browser Panel
          </button>
        </div>
      </div>
      <div className="w-[7px] bg-[radial-gradient(#fff_1px,transparent_1px)] bg-size-[3px_3px]" />
    </aside>
  );
}

/* ------------------------------------------------------------------ */
/* HMC Tools panel                                                      */
/* ------------------------------------------------------------------ */

const tabFace = "h-[21px] border border-[#a5a5a5] bg-linear-to-b from-[#e0e0e0] to-[#c9c9c9] pb-1";

function ToolsPanel() {
  return (
    <aside className="flex w-[654px] shrink-0 flex-col bg-[#ececec]">
      <header className="flex h-6 items-center justify-between pl-[9px]">
        <h2>H<span className="underline underline-offset-3">M</span>C Tools</h2>
        <DockButtons />
      </header>
      <div role="tablist" className="flex h-9 items-end pl-4">
        <button role="tab" aria-selected="false" type="button" className={`w-[77px] rounded-tl-[3px] ${tabFace}`}>Land Data</button>
        <button role="tab" aria-selected="false" type="button" className={`w-[118px] border-l-0 pl-1.5 ${tabFace}`}>WaterMark Data</button>
        <button role="tab" aria-selected="true" type="button" className="z-10 -mb-px h-7 w-[100px] rounded-t-[3px] border-x border-t-2 border-x-[#a5a5a5] border-t-[#2a80d8] bg-white pb-1 shadow-[inset_0_1px_0_#93c3f2]">
          Sections Data
        </button>
        <button role="tab" aria-selected="false" type="button" className={`w-[117px] rounded-tr-[3px] border-l-0 ${tabFace}`}>Parameters Data</button>
      </div>
      <div role="tabpanel" className="ml-4 mr-1.5 flex h-[581px] flex-col border border-[#a5a5a5] bg-white pl-[11px] pr-[13px] pt-[11px]">
        <FileField id="channel" label="ChannelNetwork Filename" value="/home/fabio/Desktop/test_barbados_hmc/TEMP/data.choice.txt" />
        <div className="mt-[7px]">
          <FileField id="points" label="Points Shapefile" value="/home/fabio/Desktop/test_barbados_hmc/test.shp" />
        </div>
        <div className="mt-[9px] flex justify-end gap-[15px]">
          <PushButton>Upload</PushButton>
          <PushButton>Remove</PushButton>
        </div>
        <div className="mt-[13px]">
          <FileField id="section" label="Section Filename [optional]" value="" />
        </div>
        <div className="mt-[9px] flex justify-end">
          <PushButton disabled>ImportTable</PushButton>
        </div>
        <fieldset className="mt-11 flex w-[185px] flex-col">
          <legend className="mx-auto pl-1 pb-1 leading-4">SectionsData Tool</legend>
          <div className="flex justify-between">
            <PushButton disabled>Start</PushButton>
            <PushButton>Stop</PushButton>
          </div>
        </fieldset>
      </div>
    </aside>
  );
}

/* ------------------------------------------------------------------ */
/* Section table dialog                                                 */
/* ------------------------------------------------------------------ */

const columns = ["sec_idx_x", "sec_idx_y", "sec_domain", "sec_name", "sec_hydro_code", "sec_area", "sec_thr_alert", "sec_thr_alarm", "sec_geo_x", "sec_geo_y", "sec_corr"];

const rows = [
  ["267", "48", "river_01", "section_01", "1001", "50", "20", "50", "-59.61370364", "13.0966386554", "1.0"],
  ["246", "67", "river_02", "section_02", "1002", "25", "10", "20", "-59.5961824699", "13.1157259636", "1.0"],
  ["225", "62", "river_02", "section_03", "1003", "15", "2", "10", "-59.600685117", "13.1342259699", "1.0"],
];

function SectionDialog() {
  return (
    <div
      role="dialog"
      aria-labelledby="dialog-title"
      className="absolute right-[22px] top-[458px] z-20 flex w-[957px] flex-col rounded-t-md border border-[#8e8e8e] bg-[#ececec] bg-linear-to-b from-white from-0% to-[#ececec] to-10% px-[11px] pb-3 shadow-[0_3px_12px_2px_rgba(0,0,0,0.75)]"
    >
      <header className="flex h-[30px] items-center">
        <span className="w-20" />
        <h2 id="dialog-title" className="flex-1 text-center text-[13px] font-bold text-[#46565f]">Section Table</h2>
        <div className="flex w-20 items-center justify-end gap-[25px] pr-0.5 text-[#46565f]">
          <button type="button" aria-label="Minimize">
            <svg viewBox="0 0 7 7" className="size-[7px]"><path d="M1 5h4v2H1z" fill="currentColor" /></svg>
          </button>
          <button type="button" aria-label="Maximize">
            <svg viewBox="0 0 7 7" className="size-[7px]"><path d="M1.500 1.500h4v4h-4z" fill="none" stroke="currentColor" strokeWidth="2" /></svg>
          </button>
          <button type="button" aria-label="Close">
            <svg viewBox="0 0 7 7" className="size-[7px]"><path d="M1 1l5 5M6 1L1 6" stroke="currentColor" strokeWidth="2.600" /></svg>
          </button>
        </div>
      </header>
      <div className="mt-3 flex h-[192px] flex-col border-b border-l border-t border-b-white border-l-[#999] border-t-[#999] bg-white">
        <div className="flex-1 overflow-hidden bg-linear-to-r from-[#ececec] from-[18px] to-white to-[18px]">
          <table className="w-[984px] table-fixed border-collapse bg-white text-left">
            <colgroup>
              <col className="w-[17px]" />
              <col className="w-[72px]" />
              <col className="w-[72px]" />
              <col className="w-[87px]" />
              <col className="w-[75px]" />
              <col className="w-[115px]" />
              <col className="w-[68px]" />
              <col className="w-[96px]" />
              <col className="w-[102px]" />
              <col className="w-[107px]" />
              <col className="w-[103px]" />
              <col className="w-[70px]" />
            </colgroup>
            <thead>
              <tr className="h-[21px]">
                <th className="border-b border-r border-b-[#c6c6c6] border-r-[#dcdcdc]" />
                {columns.map((c) => (
                  <th key={c} scope="col" className="border-b border-r border-b-[#c6c6c6] border-r-[#dcdcdc] text-center font-normal leading-4 text-[#2e3436]">
                    {c}
                  </th>
                ))}
              </tr>
            </thead>
            <tbody>
              {rows.map((row, i) => (
                <tr key={row[0]} className="h-[30px]">
                  <th scope="row" className="border-b border-r border-[#c6c6c6] text-center font-normal text-black">{i + 1}</th>
                  {row.map((cell, j) => (
                    <td key={j} className="border-b border-r border-[#c0c0c0] pb-0.5 pl-[3px] leading-4 text-[#919191]">{cell}</td>
                  ))}
                </tr>
              ))}
            </tbody>
          </table>
        </div>
        <div className="flex h-[13px] items-center gap-2 bg-[#d4d4d4] px-1">
          <svg viewBox="0 0 5 6" className="h-1.5 w-[5px]" fill="none" stroke="#777" strokeWidth="1.500"><path d="M4 .5L1 3l3 2.500" /></svg>
          <div className="flex-1 pr-[82px]">
            <div className="h-[7px] rounded-full bg-[#9b9b9b]" />
          </div>
          <svg viewBox="0 0 5 6" className="h-1.5 w-[5px]" fill="none" stroke="#777" strokeWidth="1.500"><path d="M1 .5L4 3 1 5.500" /></svg>
        </div>
      </div>
      <div className="mt-1.5 flex flex-col gap-[7px] pl-px">
        <button type="button" className="h-[26px] rounded-[3px] border border-[#adadad] bg-[#f2f2f2] p-px">
          <span className="flex h-full items-center justify-center rounded-[2px] border border-[#a8a8a8] bg-linear-to-b from-[#f8f8f8] to-[#d9d9d9]">Save</span>
        </button>
        <button type="button" className={`h-[26px] ${buttonFace}`}>Cancel</button>
      </div>
    </div>
  );
}

export default function App() {
  return (
    <div className="relative flex min-h-screen overflow-hidden bg-[#ececec] font-['DejaVu_Sans',sans-serif] text-xs text-[#31363b]">
      <LayersPanel />
      <main className="relative mb-1 min-w-0 flex-1 overflow-hidden border-l border-t border-[#999]">
        <MapCanvas />
      </main>
      <ToolsPanel />
      <SectionDialog />
    </div>
  );
}
